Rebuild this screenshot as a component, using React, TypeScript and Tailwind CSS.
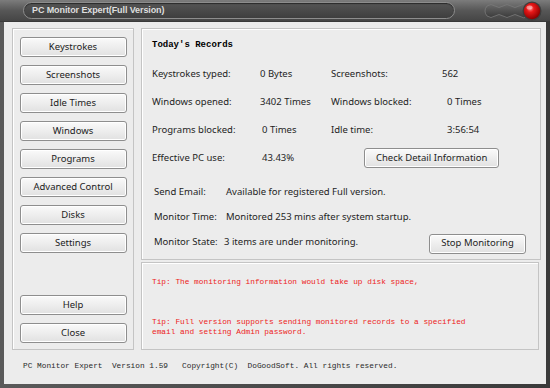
import React from "react";

const ui = { fontFamily: '"Segoe UI", "Noto Sans", "Open Sans", sans-serif' };
const mono = { fontFamily: '"Liberation Mono", "DejaVu Sans Mono", monospace' };

function SideButton({ label }: { label: string }) {
  return (
    <button
      className="h-[20px] w-[107px] rounded-[3px] border border-[#8e8e8e] bg-gradient-to-b from-[#fafafa] to-[#e1e1e1] text-[9.5px] leading-none text-[#1c1c1c] shadow-[inset_0_0_0_1px_#ffffff]"
      style={ui}
    >
      {label}
    </button>
  );
}

function TitleBar() {
  return (
    <div className="flex h-[22px] items-center border-b border-[#3a3a3a] bg-gradient-to-b from-[#7c7c7c] via-[#575757] to-[#454545] pl-[23px] pr-[7px]">
      <div className="flex h-[17px] w-[432px] items-center rounded-full border border-[#8d8d8d] bg-gradient-to-b from-[#555555] to-[#3e3e3e] pl-[8px] shadow-[inset_0_1px_1px_#2a2a2a]">
        <span
          className="text-[9px] font-bold tracking-[-0.1px] text-[#dedede]"
          style={{ fontFamily: '"Liberation Sans", Arial, sans-serif' }}
        >
          PC Monitor Expert(Full Version)
        </span>
      </div>
      <div className="ml-auto flex items-center">
        <svg width="62" height="20" viewBox="0 0 62 20">
          <defs>
            <linearGradient id="wv" x1="0" y1="0" x2="0" y2="1">
              <stop offset="0" stopColor="#6a6a6a" />
              <stop offset="1" stopColor="#3a3a3a" />
            </linearGradient>
            <radialGradient id="rd" cx="0.4" cy="0.35" r="0.65">
              <stop offset="0" stopColor="#ff8a8a" />
              <stop offset="0.35" stopColor="#e81818" />
              <stop offset="1" stopColor="#8c0000" />
            </radialGradient>
          </defs>
          <path
            d="M6 5 Q10 2 14 5 Q18 8 22 5 Q26 2 30 5 Q34 8 38 5 Q42 2 48 4 L48 16 Q42 18 38 15 Q34 12 30 15 Q26 18 22 15 Q18 12 14 15 Q10 18 6 15 Q2 10 6 5 Z"
            fill="url(#wv)"
            stroke="#7a7a7a"
            strokeWidth="0.8"
          />
          <circle cx="51" cy="10" r="9.5" fill="#3d3d3d" />
          <circle cx="51" cy="10" r="8.2" fill="url(#rd)" />
          <ellipse cx="48.5" cy="6.5" rx="3" ry="2" fill="#ffd0d0" opacity="0.55" />
        </svg>
      </div>
    </div>
  );
}

function Row({ children }: { children: React.ReactNode }) {
  return <div className="grid h-[28px] grid-cols-[108px_71px_111px_1fr] items-center">{children}</div>;
}

export default function App() {
  const left = ["Keystrokes", "Screenshots", "Idle Times", "Windows", "Programs", "Advanced Control", "Disks", "Settings"];
  return (
    <div className="flex h-[388px] w-[550px] flex-col overflow-hidden bg-gradient-to-r from-[#5a5a5a] via-[#4a4a4a] to-[#3a3a3a]">
      <TitleBar />
      <div className="mx-[4px] mb-[4px] flex flex-1 flex-col bg-[#ececec]">
        <div className="flex gap-[7px] pl-[8px] pr-[5px] pt-[6px]">
          {/* left nav */}
          <div className="flex h-[322px] w-[122px] flex-col items-center border border-[#c4c4c4] px-[6px] pb-[6px] pt-[8px] shadow-[inset_1px_1px_0_#ffffff]">
            <div className="flex flex-col gap-[8px]">
              {left.map((l) => (
                <SideButton key={l} label={l} />
              ))}
            </div>
            <div className="mt-auto flex flex-col gap-[8px]">
              <SideButton label="Help" />
              <SideButton label="Close" />
            </div>
          </div>

          {/* right */}
          <div className="flex flex-1 flex-col">
            <div
              className="h-[232px] border border-[#c4c4c4] pl-[10px] pt-[3px] text-[9.5px] text-[#1e1e1e] shadow-[inset_1px_1px_0_#ffffff]"
              style={ui}
            >
              <div className="flex h-[28px] items-center text-[9px] font-bold text-black" style={mono}>
                Today's Records
              </div>
              <Row>
                <span>Keystrokes typed:</span>
                <span>0 Bytes</span>
                <span>Screenshots:</span>
                <span>562</span>
              </Row>
              <Row>
                <span>Windows opened:</span>
                <span>3402 Times</span>
                <span>Windows blocked:</span>
                <span className="pl-[5px]">0 Times</span>
              </Row>
              <Row>
                <span>Programs blocked:</span>
                <span className="pl-[2px]">0 Times</span>
                <span>Idle time:</span>
                <span className="pl-[5px]">3:56:54</span>
              </Row>
              <div className="flex h-[28px] items-center">
                <span className="w-[110px]">Effective PC use:</span>
                <span>43.43%</span>
                <button className="ml-[70px] h-[20px] w-[135px] rounded-[3px] border border-[#8e8e8e] bg-gradient-to-b from-[#fafafa] to-[#e1e1e1] text-[9.5px] shadow-[inset_0_0_0_1px_#ffffff]">
                  Check Detail Information
                </button>
              </div>
              <div className="mt-[8px] pl-[2px]">
                <div className="flex h-[25px] items-center">
                  <span className="w-[72px]">Send Email:</span>
                  <span>Available for registered Full version.</span>
                </div>
                <div className="flex h-[25px] items-center">
                  <span className="w-[72px]">Monitor Time:</span>
                  <span>Monitored 253 mins after system startup.</span>
                </div>
                <div className="flex h-[25px] items-center">
                  <span className="w-[70px]">Monitor State:</span>
                  <span>3 items are under monitoring.</span>
                  <button className="ml-auto mr-[14px] mt-[2px] h-[20px] w-[97px] rounded-[3px] border border-[#8e8e8e] bg-gradient-to-b from-[#fafafa] to-[#e1e1e1] text-[9.5px] shadow-[inset_0_0_0_1px_#ffffff]">
                    Stop Monitoring
                  </button>
                </div>
              </div>
            </div>
            <div
              className="mt-[2px] mr-[2px] h-[88px] border border-[#c4c4c4] pl-[10px] pt-[14px] text-[7.8px] leading-[10px] text-[#ec1c22] shadow-[inset_1px_1px_0_#ffffff]"
              style={mono}
            >
              <p>Tip: The monitoring information would take up disk space,</p>
              <p className="mt-[30px]">
                Tip: Full version supports sending monitored records to a specified
                <br />
                email and setting Admin password.
              </p>
            </div>
          </div>
        </div>
        <div className="flex flex-1 items-center pl-[19px] text-[7.8px] text-[#2a2a2a] whitespace-pre" style={mono}>
          {"PC Monitor Expert  Version 1.59   Copyright(C)  DoGoodSoft. All rights reserved."}
        </div>
      </div>
    </div>
  );
}
